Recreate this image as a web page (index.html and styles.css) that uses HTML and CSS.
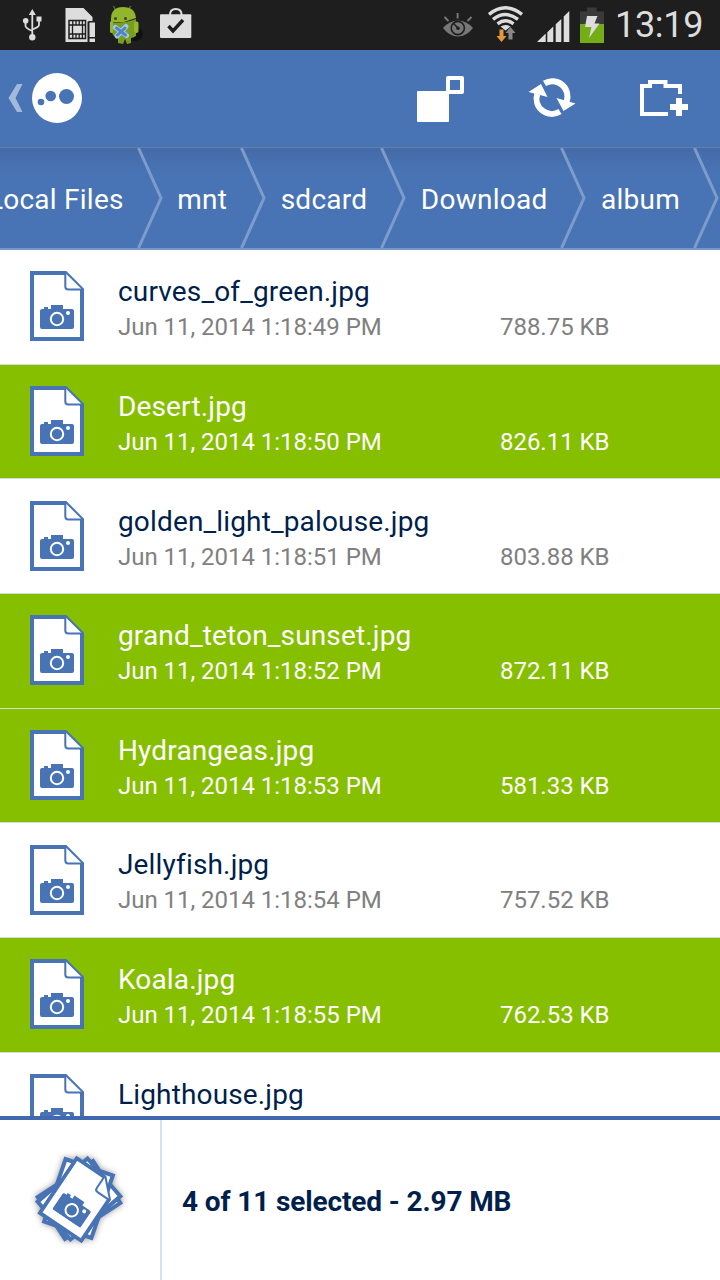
FILE: index.html
```html
<!DOCTYPE html>
<html lang="en">
  <head>
    <meta charset="UTF-8" />
    <meta name="viewport" content="width=device-width, initial-scale=1.0" />
    <title>Local Files</title>
    <link rel="stylesheet" href="styles.css">
  </head>
  <body>
    <!-- shared shapes -->
    <svg class="defs" width="0" height="0">
      <symbol id="camera" viewBox="0 0 34 24">
        <path d="M2 4h2v-2h4v2h3v-4h12v4h9q2 0 2 2v16q0 2-2 2h-30q-2 0-2-2v-16q0-2 2-2z" fill="#4873b5" />
        <circle cx="17" cy="14" r="6.2" fill="none" stroke="#fff" stroke-width="2" />
        <circle cx="28" cy="8" r="2" fill="#fff" />
      </symbol>
      <symbol id="photo-file" viewBox="0 0 54 70">
        <path d="M2 2h33.5L52 18.5V68H2z" fill="#fff" stroke="#4873b5" stroke-width="4" />
        <path d="M35.3 2v13.5q0 3 3 3H52" fill="#fff" stroke="#4873b5" stroke-width="2" />
        <use href="#camera" x="10" y="34" width="34" height="24" />
      </symbol>
      <symbol id="chevron" viewBox="0 0 26 100">
        <path d="M1.5 0L24 50L1.5 100" fill="none" stroke="#7d9ccb" stroke-width="3" />
      </symbol>
    </svg>

    <div class="status-bar">
      <svg class="status-icons" width="200" height="50" viewBox="0 0 200 50">
        <!-- usb -->
        <g fill="none" stroke="#ddd" stroke-width="1.8">
          <path d="M32.3 14v22M25.5 22v4q0 2 6.8 5M39 20v5q0 2-6.7 4.5" />
        </g>
        <path d="M32.3 9l3.5 6h-7zM36.5 16.5h5v5h-5z" fill="#ddd" />
        <circle cx="25.7" cy="20.8" r="2.8" fill="#ddd" />
        <circle cx="32.3" cy="37.2" r="3.2" fill="#ddd" />
        <!-- sim -->
        <path d="M65.5 8h18l9 9v4h-4v21h-23z" fill="#ddd" />
        <rect x="69" y="20.5" width="16.5" height="18" fill="#ddd" stroke="#1e1e1e" stroke-width="1.5" />
        <path d="M72.8 21v4M76 21v4M79.2 21v4M82.4 21v4M72.8 34v4M76 34v4M79.2 34v4M82.4 34v4M72.5 25h10v9h-10zM69 25h4M82 25h4M69 34h4M82 34h4" fill="none" stroke="#1e1e1e" stroke-width="1.3" />
        <path d="M87.5 21.500h7.500v20.500h-7.500z" fill="#1e1e1e" />
        <path d="M89.5 22.5h5.500v14.500h-5.500zM89.5 38.5h5.500v3.500h-5.500z" fill="#ddd" />
        <!-- android -->
        <ellipse cx="134" cy="34" rx="9" ry="7" fill="#111" />
        <path d="M116 11l-2.500-5M129 9l1.500-3" stroke="#779c20" stroke-width="1" />
        <path d="M111 19q0-12 12-12t13 11l-12 4-13 0z" fill="#92b52c" />
        <path d="M111 22q12 2 25-3v17q-3 2-5 2v5l-4 1-2-5-2 5-5-1v-5l-4-2q-3-2-3-14z" fill="#789e20" />
        <rect x="134" y="21.5" width="4.5" height="11.5" rx="2" fill="#91b831" />
        <rect x="110" y="21" width="3" height="12" rx="1.5" fill="#91b831" />
        <circle cx="115.5" cy="18.5" r="1.5" fill="#38491b" />
        <circle cx="125.5" cy="18.5" r="1.5" fill="#38491b" />
        <path d="M115.5 27.500l11 8M126 26.500l-9 9.500" stroke="#a7c6ec" stroke-width="5" stroke-linecap="round" />
        <path d="M116.5 28l9 7M125 28l-7.500 7" stroke="#4d85cb" stroke-width="3" stroke-linecap="round" />
        <!-- store bag -->
        <rect x="160" y="14.3" width="31.3" height="23.7" rx="1" fill="#ddd" />
        <path d="M170 15q0-6 5.800-6t5.800 6" fill="none" stroke="#ddd" stroke-width="2" />
        <path d="M168.5 26l4.500 5 10-11" fill="none" stroke="#1e1e1e" stroke-width="3.4" />
      </svg>
      <svg class="status-icons" width="180" height="50" viewBox="436 0 180 50">
        <!-- smart stay eye -->
        <path d="M443 28q6.500-7.500 15-7.500T473 28q-6.500 8.500-15 8.500T443 28z" fill="#777" />
        <circle cx="457.8" cy="28" r="6.6" fill="#777" stroke="#1e1e1e" stroke-width="1.6" />
        <path d="M453.5 23.500l4.500 4.500" stroke="#1e1e1e" stroke-width="1.6" />
        <circle cx="458" cy="28.3" r="1.8" fill="#1e1e1e" />
        <path d="M444.5 17l4 4M457.6 13v5.500M471.5 17l-4 4" stroke="#777" stroke-width="2" />
        <!-- wifi -->
        <g fill="none" stroke="#ddd" stroke-width="3.4">
          <path d="M489 14.300q16.500-13 33 0" />
          <path d="M493 19.300q12.500-9.500 25 0" />
          <path d="M497.5 23.800q8-6 16 0" />
        </g>
        <path d="M500.5 26.500q5-3 10 0l-5 4z" fill="#ddd" />
        <path d="M499.5 29.500h4v6.500h3l-5 6-5-6h3z" fill="#e29a38" />
        <path d="M508.5 39.500h4v-6.500h3l-5-6-5 6h3z" fill="#888" />
        <!-- signal -->
        <path d="M537 42l8.700-8.500v8.500zM547.3 42v-9.800l6-5.700v15.500zM555.7 42v-17.800l5.600-5.300v23.100zM563.7 42v-25.400l5.600-5.600v31z" fill="#ddd" />
        <!-- battery -->
        <path d="M580 11.500h7v-4h9.500v4h7.500v13h-24z" fill="#3a3a3a" />
        <rect x="580" y="24" width="24" height="19" fill="#76ac16" />
        <path d="M587 16h10.500l-3 7.500h5l-10.500 14.500 2.500-11h-6.500z" fill="#ddd" />
      </svg>
      <span class="clock">13:19</span>
    </div>

    <div class="action-bar">
      <svg width="100" height="97" viewBox="0 50 100 97">
        <path d="M17 84h5.500l-7 14 7 14h-5.500l-8.500-14z" fill="#a3b9db" />
        <circle cx="57" cy="98" r="25" fill="#fff" />
        <circle cx="41" cy="102" r="3.3" fill="#4873b5" />
        <circle cx="50.7" cy="96" r="5.3" fill="#4873b5" />
        <circle cx="66.5" cy="96.5" r="7.5" fill="#4873b5" />
      </svg>
      <div class="actions">
        <svg width="49" height="48" viewBox="416 75 49 48">
          <rect x="417" y="91" width="32" height="31" rx="1" fill="#fff" />
          <rect x="448" y="78" width="14" height="14" fill="#4873b5" stroke="#fff" stroke-width="4" stroke-linejoin="round" />
        </svg>
        <svg width="48" height="48" viewBox="528 75 48 48">
          <g fill="none" stroke="#fff" stroke-width="6">
            <path d="M544.5 83.300A15.300 15.300 0 0 1 566.500 102" />
            <path d="M560 111.500A15.300 15.300 0 0 1 537.200 94" />
          </g>
          <path d="M528.5 92L541 84l6.500 13zM556.5 98l19 5.500-12 7.500z" fill="#fff" />
        </svg>
        <svg width="50" height="48" viewBox="639 75 50 48">
          <path d="M668 114h-26V86h8v-4h15.500v4h14.500v8" fill="none" stroke="#fff" stroke-width="4" />
          <path d="M679 98v18M670 107h18" stroke="#fff" stroke-width="6" />
        </svg>
      </div>
    </div>

    <div class="breadcrumbs">
      <span class="crumb">Local Files</span>
      <svg class="chevron"><use href="#chevron" /></svg>
      <span class="crumb">mnt</span>
      <svg class="chevron"><use href="#chevron" /></svg>
      <span class="crumb">sdcard</span>
      <svg class="chevron"><use href="#chevron" /></svg>
      <span class="crumb">Download</span>
      <svg class="chevron"><use href="#chevron" /></svg>
      <span class="crumb">album</span>
      <svg class="chevron"><use href="#chevron" /></svg>
    </div>

    <div class="file-list">
      <div class="file">
        <svg class="file-icon"><use href="#photo-file" /></svg>
        <div class="file-info">
          <div class="file-name">curves_of_green.jpg</div>
          <div class="file-meta"><span class="date">Jun 11, 2014 1:18:49 PM</span><span>788.75 KB</span></div>
        </div>
      </div>
      <div class="file selected">
        <svg class="file-icon"><use href="#photo-file" /></svg>
        <div class="file-info">
          <div class="file-name">Desert.jpg</div>
          <div class="file-meta"><span class="date">Jun 11, 2014 1:18:50 PM</span><span>826.11 KB</span></div>
        </div>
      </div>
      <div class="file">
        <svg class="file-icon"><use href="#photo-file" /></svg>
        <div class="file-info">
          <div class="file-name">golden_light_palouse.jpg</div>
          <div class="file-meta"><span class="date">Jun 11, 2014 1:18:51 PM</span><span>803.88 KB</span></div>
        </div>
      </div>
      <div class="file selected">
        <svg class="file-icon"><use href="#photo-file" /></svg>
        <div class="file-info">
          <div class="file-name">grand_teton_sunset.jpg</div>
          <div class="file-meta"><span class="date">Jun 11, 2014 1:18:52 PM</span><span>872.11 KB</span></div>
        </div>
      </div>
      <div class="file selected">
        <svg class="file-icon"><use href="#photo-file" /></svg>
        <div class="file-info">
          <div class="file-name">Hydrangeas.jpg</div>
          <div class="file-meta"><span class="date">Jun 11, 2014 1:18:53 PM</span><span>581.33 KB</span></div>
        </div>
      </div>
      <div class="file">
        <svg class="file-icon"><use href="#photo-file" /></svg>
        <div class="file-info">
          <div class="file-name">Jellyfish.jpg</div>
          <div class="file-meta"><span class="date">Jun 11, 2014 1:18:54 PM</span><span>757.52 KB</span></div>
        </div>
      </div>
      <div class="file selected">
        <svg class="file-icon"><use href="#photo-file" /></svg>
        <div class="file-info">
          <div class="file-name">Koala.jpg</div>
          <div class="file-meta"><span class="date">Jun 11, 2014 1:18:55 PM</span><span>762.53 KB</span></div>
        </div>
      </div>
      <div class="file">
        <svg class="file-icon"><use href="#photo-file" /></svg>
        <div class="file-info">
          <div class="file-name">Lighthouse.jpg</div>
        </div>
      </div>
    </div>

    <div class="selection-bar">
      <div class="selection-icon">
        <svg class="stack" width="160" height="160" viewBox="0 1120 160 160">
          <g fill="#fff" stroke="#4873b5" stroke-width="4">
            <path d="M-25-33h50v66h-50z" transform="translate(79 1200) rotate(57)" />
            <path d="M-25-33h50v66h-50z" transform="translate(79 1199) rotate(49)" />
            <path d="M-25-33h50v66h-50z" transform="translate(78.5 1198.5) rotate(19)" />
          </g>
          <g transform="translate(79 1199.5) rotate(34) translate(-27 -35)">
            <use href="#photo-file" width="54" height="70" />
          </g>
        </svg>
      </div>
      <div class="selection-text">4 of 11 selected - 2.97 MB</div>
    </div>
  </body>
</html>
```
FILE: styles.css
```css
body {
  font-family: Roboto, sans-serif;
  margin: 0;
  width: 720px;
  height: 1280px;
  display: flex;
  flex-direction: column;
  overflow: hidden;
  background-color: #fff;
  color: #001f4b;
}

svg {
  display: block;
  flex-shrink: 0;
}

.defs {
  position: absolute;
}

.status-bar {
  height: 50px;
  flex-shrink: 0;
  display: flex;
  background-color: #1e1e1e;
}

.status-icons:nth-child(2) {
  margin-left: 236px;
}

.clock {
  color: #ddd;
  font-size: 36px;
  letter-spacing: -0.3px;
  line-height: 51px;
  margin-left: -1px;
  white-space: nowrap;
}

.action-bar {
  height: 97px;
  flex-shrink: 0;
  display: flex;
  justify-content: space-between;
  background-color: #4873b5;
}

.actions {
  display: flex;
  gap: 63px;
  padding-top: 25px;
  padding-right: 31px;
}

.breadcrumbs {
  height: 103px;
  flex-shrink: 0;
  box-sizing: border-box;
  border-top: 1px solid #6680a5;
  border-bottom: 2px solid #7897ca;
  background: linear-gradient(#446ba7, #4873b5 24px);
  display: flex;
  justify-content: flex-end;
  align-items: center;
  overflow: hidden;
  padding-right: 1px;
}

.crumb {
  color: #fff;
  font-size: 28px;
  letter-spacing: 0.25px;
  white-space: nowrap;
  margin: 2px 13px 0 14.5px;
}

.chevron {
  width: 26px;
  height: 100px;
}

.file-list {
  height: 866px;
  flex-shrink: 0;
  overflow: hidden;
}

.file {
  height: 114.67px;
  box-sizing: border-box;
  border-bottom: 1px solid #d5dfcf;
  padding: 21.4px 0 0 30px;
  display: flex;
}

.file.selected {
  background-color: #86be00;
  color: #fff;
}

.file-icon {
  width: 54px;
  height: 70px;
}

.file-info {
  margin-left: 34px;
  margin-top: 0.8px;
}

.file-name {
  font-size: 28px;
  letter-spacing: 0.15px;
  line-height: 40px;
}

.file-meta {
  display: flex;
  font-size: 24px;
  letter-spacing: -0.03px;
  line-height: 30px;
  color: #808080;
}

.selected .file-meta {
  color: #fff;
}

.date {
  width: 382px;
}

.selection-bar {
  flex: 1;
  border-top: 4px solid #4169b0;
  display: flex;
}

.selection-icon {
  width: 160px;
  border-right: 2px solid #d6e2f1;
}

.stack {
  filter: drop-shadow(0 0 3px rgba(0, 0, 0, 0.4));
}

.selection-text {
  margin-left: 20px;
  font-size: 28px;
  font-weight: bold;
  letter-spacing: -0.12px;
  line-height: 163px;
}
```
